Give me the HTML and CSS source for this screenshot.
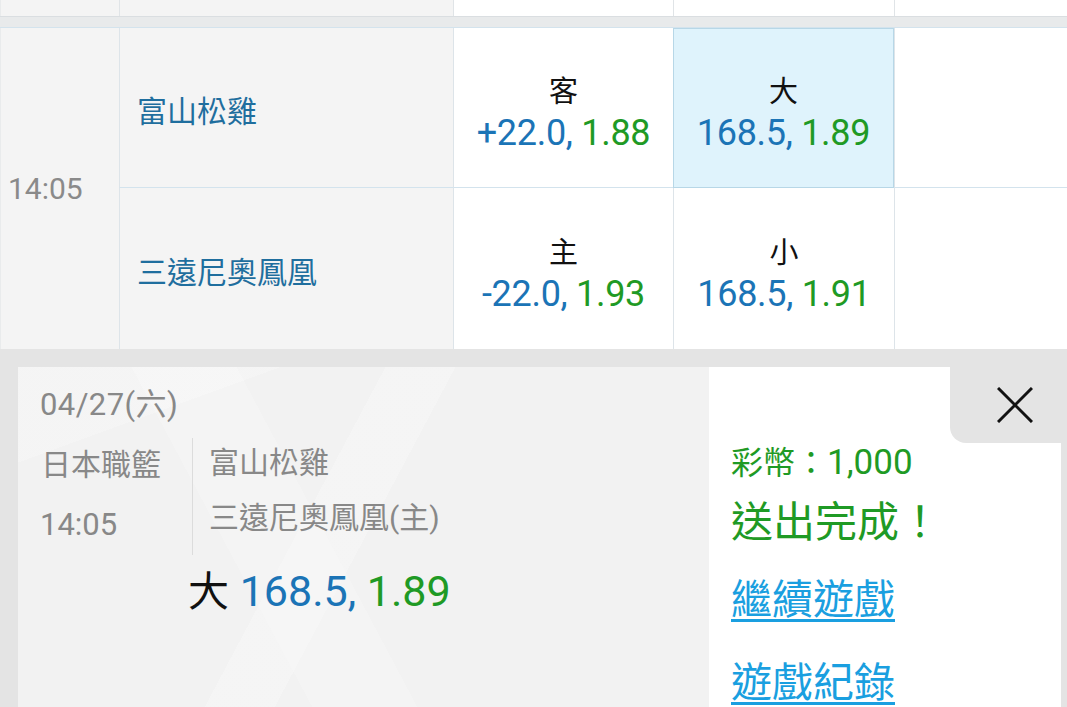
FILE: index.html
```html
<!DOCTYPE html>
<html lang="zh-Hant">
<head>
<meta charset="utf-8">
<title>投注</title>
<link rel="stylesheet" href="styles.css">
</head>
<body>
<div class="page">
  <div class="row-prev">
    <div class="c c-time"></div>
    <div class="c c-team"></div>
    <div class="c c-odd"></div>
    <div class="c c-odd"></div>
    <div class="c c-last"></div>
  </div>
  <div class="sep"></div>
  <div class="match">
    <div class="m-time">14:05</div>
    <div class="m-team r1">富山松雞</div>
    <div class="m-odd r1"><span class="lab">客</span><span class="odds"><span class="b">+22.0,</span> <span class="g">1.88</span></span></div>
    <div class="m-odd r1 sel"><span class="lab">大</span><span class="odds"><span class="b">168.5,</span> <span class="g">1.89</span></span></div>
    <div class="m-last r1"></div>
    <div class="m-team">三遠尼奧鳳凰</div>
    <div class="m-odd"><span class="lab">主</span><span class="odds"><span class="b">-22.0,</span> <span class="g">1.93</span></span></div>
    <div class="m-odd"><span class="lab">小</span><span class="odds"><span class="b">168.5,</span> <span class="g">1.91</span></span></div>
    <div class="m-last"></div>
  </div>
  <div class="slip">
    <div class="slip-left">
      <div class="date">04/27(六)</div>
      <div class="info">
        <div class="league">
          <div>日本職籃</div>
          <div>14:05</div>
        </div>
        <div class="teams">
          <div>富山松雞</div>
          <div>三遠尼奧鳳凰(主)</div>
        </div>
      </div>
      <div class="bet"><span class="k">大</span> <span class="b">168.5,</span> <span class="g">1.89</span></div>
    </div>
    <div class="slip-right">
      <div class="head">
        <button class="close" aria-label="關閉">
          <svg width="36" height="36" viewBox="0 0 36 36"><path d="M1 1 L35 35 M35 1 L1 35" stroke="#111" stroke-width="3" fill="none"/></svg>
        </button>
      </div>
      <div class="coin">彩幣：<span class="num">1,000</span></div>
      <div class="done">送出完成！</div>
      <a class="link l1" href="#">繼續遊戲</a>
      <a class="link l2" href="#">遊戲紀錄</a>
    </div>
  </div>
</div>
</body>
</html>
```

FILE: styles.css
```css
* { box-sizing: border-box; }
html, body { margin: 0; padding: 0; }
body {
  width: 1067px;
  height: 707px;
  overflow: hidden;
  background: #e4e4e4;
  font-family: Roboto, "Noto Sans CJK TC", sans-serif;
}
.page { width: 1067px; }

.row-prev {
  display: grid;
  grid-template-columns: 119px 334px 220px 221px 1fr;
  height: 16px;
}
.row-prev .c { border-left: 1px solid #e0e4e7; background: #fff; }
.row-prev .c-time { background: #f4f4f4; border-left-color: #e9ebec; }
.row-prev .c-team { background: #f4f4f4; }

.sep {
  height: 12px;
  background: #e8eaeb;
  border-top: 1px solid #dadee1;
  border-bottom: 1px solid #d3e3ed;
}

.match {
  display: grid;
  grid-template-columns: 119px 334px 220px 221px 1fr;
  grid-template-rows: 160px 161px;
}
.m-time {
  grid-row: 1 / span 2;
  background: #f4f4f4;
  display: flex;
  align-items: center;
  padding-left: 7px;
  font-size: 30px;
  color: #8a8a8a;
  border-left: 1px solid #e9ebec;
}
.m-team {
  background: #f4f4f4;
  border-left: 1px solid #dde4e9;
  display: flex;
  align-items: center;
  padding: 2px 0 0 17px;
  font-size: 30px;
  color: #1f6e9e;
}
.m-team.r1, .m-odd.r1, .m-last.r1 { border-bottom: 1px solid #d3e3ed; }
.m-odd {
  background: #fff;
  border-left: 1px solid #dde4e9;
  display: flex;
  flex-direction: column;
  align-items: center;
  justify-content: center;
  padding-top: 10px;
}
.m-odd.sel {
  background: #dff3fc;
  border: 1px solid #b7d7e7;
}
.m-last { background: #fff; border-left: 1px solid #dde4e9; }
.lab { font-size: 29px; line-height: 40px; color: #111; }
.odds { font-size: 36px; line-height: 42px; letter-spacing: -0.3px; }
.b { color: #1b74b6; }
.g { color: #1f9a25; }

.slip {
  display: grid;
  grid-template-columns: 691px 352px;
  padding: 18px 6px 0 18px;
  height: 358px;
}
.slip-left {
  background:
    linear-gradient(118deg, transparent 0 42%, rgba(255,255,255,0.22) 42% 50%, transparent 50%),
    linear-gradient(62deg, transparent 0 34%, rgba(255,255,255,0.18) 34% 46%, transparent 46%),
    linear-gradient(160deg, rgba(255,255,255,0.2) 0 16%, transparent 16%),
    #f2f2f2;
  padding: 13px 0 0 22px;
  color: #888;
  font-size: 30px;
}
.date { line-height: 50px; font-size: 31px; letter-spacing: 0.4px; }
.info {
  display: flex;
  margin-top: 5px;
}
.league {
  width: 153px;
  border-right: 1px solid #dcdcdc;
  margin: 3px 0 8px;
}
.league div { line-height: 60px; }
.league div:first-child { margin-top: -3px; padding-left: 1px; }
.league div:last-child { font-size: 31px; }
.teams { padding-left: 16px; }
.teams div { line-height: 55px; }
.bet {
  margin: 3px 0 0 148px;
  line-height: 50px;
  font-size: 43px;
}
.bet .k { color: #111; font-size: 41px; }

.slip-right {
  background: #fff;
  padding-left: 22px;
}
.head {
  display: flex;
  justify-content: flex-end;
  height: 76px;
}
.close {
  width: 111px;
  height: 76px;
  background: #e4e4e4;
  border: 0;
  border-bottom-left-radius: 16px;
  padding: 0 0 0 18px;
  display: flex;
  align-items: center;
  justify-content: center;
}
.coin {
  color: #1f9a25;
  font-size: 32px;
  line-height: 40px;
}
.coin .num { font-size: 35px; }
.done {
  color: #1f9a25;
  font-size: 42px;
  line-height: 80px;
}
.link {
  display: block;
  width: max-content;
  color: #1a9fe0;
  font-size: 41px;
  line-height: 60px;
  text-decoration: underline;
  text-decoration-thickness: 3px;
  text-underline-offset: 5px;
}
.l1 { margin-top: 7px; }
.l2 { margin-top: 23px; }
```
